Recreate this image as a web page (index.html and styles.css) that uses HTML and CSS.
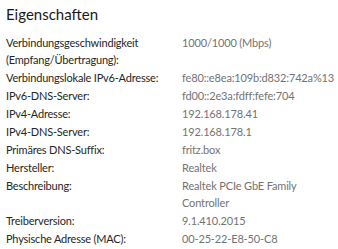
FILE: index.html
```html
<!DOCTYPE html>
<html lang="de">
<head>
<meta charset="utf-8">
<link rel="stylesheet" href="styles.css">
</head>
<body>
<section class="panel">
  <h2 class="title">Eigenschaften</h2>
  <dl class="props">
    <dt>Verbindungsgeschwindigkeit (Empfang/Übertragung):</dt>
    <dd>1000/1000 (Mbps)</dd>
    <dt>Verbindungslokale IPv6-Adresse:</dt>
    <dd>fe80::e8ea:109b:d832:742a%13</dd>
    <dt>IPv6-DNS-Server:</dt>
    <dd>fd00::2e3a:fdff:fefe:704</dd>
    <dt>IPv4-Adresse:</dt>
    <dd>192.168.178.41</dd>
    <dt>IPv4-DNS-Server:</dt>
    <dd>192.168.178.1</dd>
    <dt>Primäres DNS-Suffix:</dt>
    <dd>fritz.box</dd>
    <dt>Hersteller:</dt>
    <dd>Realtek</dd>
    <dt>Beschreibung:</dt>
    <dd>Realtek PCIe GbE Family Controller</dd>
    <dt>Treiberversion:</dt>
    <dd>9.1.410.2015</dd>
    <dt>Physische Adresse (MAC):</dt>
    <dd>00-25-22-E8-50-C8</dd>
  </dl>
</section>
</body>
</html>
```

FILE: styles.css
```css
html, body {
  margin: 0;
  padding: 0;
  background: #ffffff;
}
.panel {
  padding: 4px 6px 0 6px;
  font-family: Lato, "Open Sans", sans-serif;
}
.title {
  margin: 0 0 10px 0;
  font-size: 15px;
  font-weight: 400;
  line-height: 20px;
  color: #1a1a1a;
}
.props {
  margin: 0;
  display: grid;
  grid-template-columns: 172px 126px;
  column-gap: 4px;
  row-gap: 1px;
  line-height: 17px;
}
.props dt {
  color: #262626;
  font-size: 11px;
  letter-spacing: -0.2px;
}
.props dd {
  margin: 0;
  color: #737373;
  font-size: 11px;
  letter-spacing: -0.15px;
}
```
